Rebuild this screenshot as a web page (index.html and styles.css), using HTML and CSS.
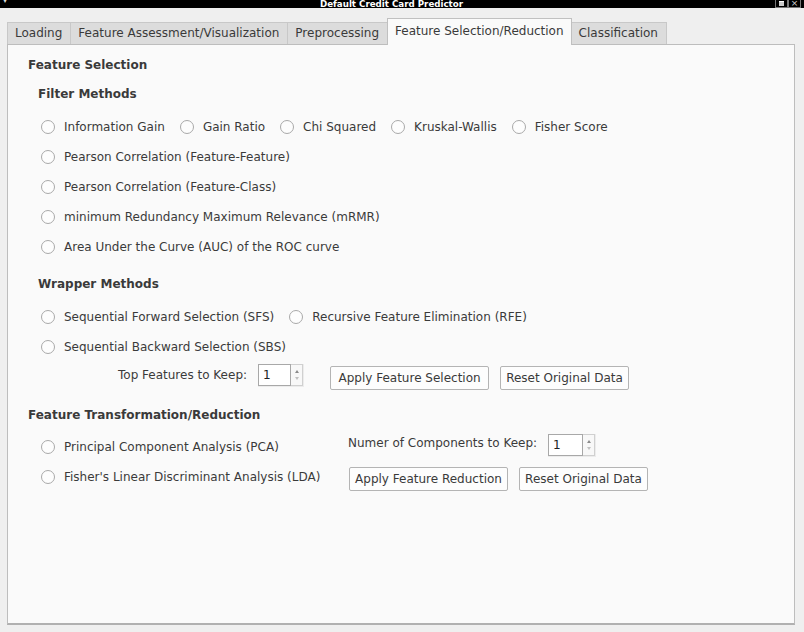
FILE: index.html
```html
<!DOCTYPE html>
<html>
<head>
<meta charset="utf-8">
<title>Default Credit Card Predictor</title>
<link rel="stylesheet" href="styles.css">
</head>
<body>
<div class="titlebar">
  <span class="menu-arrow">&#9662;</span>
  <span class="title">Default Credit Card Predictor</span>
  <span class="wbtns"><span class="wbtn wmax"></span><span class="wbtn wclose">&#215;</span></span>
</div>
<div class="window">
  <div class="tabbar">
    <div class="tab">Loading</div>
    <div class="tab">Feature Assessment/Visualization</div>
    <div class="tab">Preprocessing</div>
    <div class="tab active">Feature Selection/Reduction</div>
    <div class="tab">Classification</div>
  </div>
  <div class="panel">
    <div class="h1">Feature Selection</div>
    <div class="h2">Filter Methods</div>
    <div class="rows">
      <div class="row">
        <label class="radio"><span class="dot"></span>Information Gain</label>
        <label class="radio"><span class="dot"></span>Gain Ratio</label>
        <label class="radio"><span class="dot"></span>Chi Squared</label>
        <label class="radio"><span class="dot"></span>Kruskal-Wallis</label>
        <label class="radio"><span class="dot"></span>Fisher Score</label>
      </div>
      <div class="row"><label class="radio"><span class="dot"></span>Pearson Correlation (Feature-Feature)</label></div>
      <div class="row"><label class="radio"><span class="dot"></span>Pearson Correlation (Feature-Class)</label></div>
      <div class="row"><label class="radio"><span class="dot"></span>minimum Redundancy Maximum Relevance (mRMR)</label></div>
      <div class="row"><label class="radio"><span class="dot"></span>Area Under the Curve (AUC) of the ROC curve</label></div>
    </div>
    <div class="h2 h2-wrap">Wrapper Methods</div>
    <div class="rows">
      <div class="row">
        <label class="radio"><span class="dot"></span>Sequential Forward Selection (SFS)</label>
        <label class="radio"><span class="dot"></span>Recursive Feature Elimination (RFE)</label>
      </div>
      <div class="row"><label class="radio"><span class="dot"></span>Sequential Backward Selection (SBS)</label></div>
    </div>
    <div class="params">
      <span class="plabel">Top Features to Keep:</span>
      <span class="spin"><span class="spin-val">1</span><span class="spin-arrows"><span class="up"></span><span class="down"></span></span></span>
      <button class="btn btn-apply btn-first">Apply Feature Selection</button>
      <button class="btn btn-reset">Reset Original Data</button>
    </div>
    <div class="h1 h1-trans">Feature Transformation/Reduction</div>
    <div class="trans">
      <div class="row"><label class="radio"><span class="dot"></span>Principal Component Analysis (PCA)</label></div>
      <div class="right right-top">
        <span class="plabel">Numer of Components to Keep:</span>
        <span class="spin spin-wide"><span class="spin-val">1</span><span class="spin-arrows"><span class="up"></span><span class="down"></span></span></span>
      </div>
      <div class="row"><label class="radio"><span class="dot"></span>Fisher's Linear Discriminant Analysis (LDA)</label></div>
      <div class="right right-bottom">
        <button class="btn btn-apply">Apply Feature Reduction</button>
        <button class="btn btn-reset">Reset Original Data</button>
      </div>
    </div>
  </div>
</div>
</body>
</html>
```

FILE: styles.css
```css
* { box-sizing: border-box; }
html, body {
  margin: 0;
  padding: 0;
  width: 804px;
  height: 632px;
  background: #efefef;
  overflow: hidden;
  font-family: "DejaVu Sans", "Liberation Sans", sans-serif;
  font-size: 12px;
  color: #3a3a3a;
}
.titlebar {
  height: 8px;
  background: #000;
  position: relative;
  overflow: hidden;
  display: flex;
  justify-content: center;
}
.title {
  color: #fff;
  font-weight: bold;
  font-size: 8.7px;
  line-height: 8px;
  margin-right: 21px;
}
.menu-arrow {
  position: absolute;
  left: 3px;
  top: -3px;
  color: #ddd;
  font-size: 8px;
  line-height: 8px;
}
.wbtns {
  position: absolute;
  right: 3px;
  top: 0;
  display: flex;
  height: 8px;
}
.wbtn {
  width: 13px;
  height: 8px;
  border: 1px solid #777;
  border-top: none;
  color: #ccc;
  font-size: 9px;
  line-height: 6px;
  text-align: center;
}
.wmax::after {
  content: "";
  display: block;
  width: 5px;
  height: 4px;
  margin: 1px auto 0;
  background: #ccc;
  border-top: 1px solid #fff;
}
.window {
  padding: 10px 9px 0 7px;
}
.tabbar {
  display: flex;
  align-items: flex-end;
  height: 26px;
  position: relative;
  z-index: 2;
}
.tab {
  height: 22px;
  line-height: 21px;
  padding: 0 8px 0 7px;
  background: #dcdcdc;
  border: 1px solid #c8c8c8;
  border-bottom: none;
  border-right: none;
  color: #3a3a3a;
}
.tab:nth-child(5) { border-right: 1px solid #c8c8c8; }
.tab.active {
  height: 27px;
  line-height: 25px;
  background: #fafafa;
  border: 1px solid #c0c0c0;
  border-bottom: none;
  margin-bottom: -1px;
  padding: 0 7px 0 7px;
}
.tab.active + .tab { border-left: none; }
.panel {
  height: 581px;
  background: #fafafa;
  border: 1px solid #bdbdbd;
  border-bottom: 2px solid #b0b0b0;
  padding: 10px 0 0 20px;
}
.h1, .h2 {
  font-weight: bold;
  height: 20px;
  line-height: 20px;
  color: #3a3a3a;
}
.h2 {
  margin: 9px 0 8px 10px;
}
.h2-wrap { margin-top: 12px; }
.rows { margin-left: 13px; }
.row {
  height: 30px;
  display: flex;
  align-items: center;
}
.radio {
  display: flex;
  align-items: center;
  margin-right: 15px;
  white-space: nowrap;
}
.dot {
  width: 14px;
  height: 14px;
  border-radius: 50%;
  border: 1px solid #a9a9a9;
  background: #fdfdfd;
  margin-right: 9px;
}
.params {
  display: flex;
  align-items: flex-start;
  margin: 4px 0 0 90px;
  height: 24px;
}
.params .plabel { margin-top: 1px; }
.plabel {
  line-height: 16px;
  white-space: nowrap;
}
.spin {
  display: flex;
  width: 46px;
  height: 23px;
  margin: -2px 0 0 11px;
  background: #ececec;
  padding: 0 1px 1px 0;
}
.spin-wide { width: 48px; margin-left: 11px; }
.spin-val {
  flex: 1;
  background: #fff;
  border: 1px solid #a8a8a8;
  padding-left: 4px;
  line-height: 20px;
  color: #222;
}
.spin-arrows {
  width: 12px;
  background: #f8f8f8;
  border: 1px solid #d0d0d0;
  border-left: none;
  display: flex;
  flex-direction: column;
  align-items: center;
  justify-content: space-around;
  padding: 3px 0;
}
.up, .down {
  width: 0;
  height: 0;
  border-left: 2.5px solid transparent;
  border-right: 2.5px solid transparent;
}
.up { border-bottom: 3px solid #8a8a8a; }
.down { border-top: 3px solid #c0c0c0; }
.btn {
  font: inherit;
  color: #3a3a3a;
  height: 24px;
  padding: 0;
  text-align: center;
  background: #fdfdfd;
  border: 1px solid #b4b4b4;
  border-radius: 2px;
  margin-left: 11px;
  white-space: nowrap;
}
.btn-apply { width: 159px; }
.btn-reset { width: 129px; }
.btn-first { margin-left: 26px; }
.h1-trans { margin-top: 15px; }
.trans {
  display: grid;
  grid-template-columns: 307px auto;
  margin: 7px 0 0 13px;
}
.right {
  display: flex;
  align-items: flex-start;
}
.right-top { padding-top: 3px; }
.right-top .spin { margin-top: -1px; }
.right-bottom { padding-top: 5px; }
.right-bottom .btn:first-child { margin-left: 1px; }
```
